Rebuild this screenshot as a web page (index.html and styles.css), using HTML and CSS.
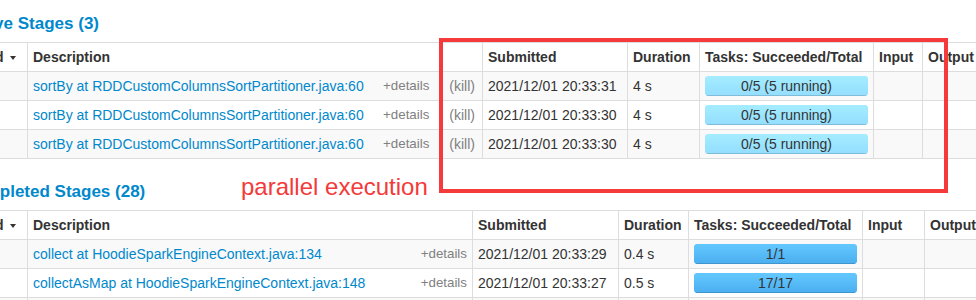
FILE: index.html
```html
<!DOCTYPE html>
<html lang="en">
<head>
    <meta charset="UTF-8">
    <meta name="viewport" content="width=device-width, initial-scale=1.0">
    <title>Stages for All Jobs</title>
    <link rel="stylesheet" href="styles.css">
</head>
<body>

<div class="page">

    <!-- Active stages -->
    <h4 class="section-title">
        <span class="collapse-arrow"></span><a href="#active">Active Stages (3)</a>
    </h4>
    <table class="stages stages-active">
        <colgroup>
            <col class="c-id">
            <col class="c-desc">
            <col class="c-submitted">
            <col class="c-duration">
            <col class="c-tasks">
            <col class="c-input">
            <col class="c-output">
        </colgroup>
        <thead>
            <tr>
                <th>Stage Id<span class="sort-arrow"></span></th>
                <th>Description</th>
                <th>Submitted</th>
                <th>Duration</th>
                <th>Tasks: Succeeded/Total</th>
                <th>Input</th>
                <th>Output</th>
            </tr>
        </thead>
        <tbody>
            <tr>
                <td>32</td>
                <td>
                    <a class="kill-link" href="#">(kill)</a>
                    <span class="expand-details">+details</span>
                    <a class="name-link" href="#">sortBy at RDDCustomColumnsSortPartitioner.java:60</a>
                </td>
                <td>2021/12/01 20:33:31</td>
                <td>4 s</td>
                <td>
                    <div class="progress">
                        <span class="progress-text">0/5 (5 running)</span>
                        <div class="bar bar-running" style="width: 100%"></div>
                    </div>
                </td>
                <td></td>
                <td></td>
            </tr>
            <tr>
                <td>31</td>
                <td>
                    <a class="kill-link" href="#">(kill)</a>
                    <span class="expand-details">+details</span>
                    <a class="name-link" href="#">sortBy at RDDCustomColumnsSortPartitioner.java:60</a>
                </td>
                <td>2021/12/01 20:33:30</td>
                <td>4 s</td>
                <td>
                    <div class="progress">
                        <span class="progress-text">0/5 (5 running)</span>
                        <div class="bar bar-running" style="width: 100%"></div>
                    </div>
                </td>
                <td></td>
                <td></td>
            </tr>
            <tr>
                <td>30</td>
                <td>
                    <a class="kill-link" href="#">(kill)</a>
                    <span class="expand-details">+details</span>
                    <a class="name-link" href="#">sortBy at RDDCustomColumnsSortPartitioner.java:60</a>
                </td>
                <td>2021/12/01 20:33:30</td>
                <td>4 s</td>
                <td>
                    <div class="progress">
                        <span class="progress-text">0/5 (5 running)</span>
                        <div class="bar bar-running" style="width: 100%"></div>
                    </div>
                </td>
                <td></td>
                <td></td>
            </tr>
        </tbody>
    </table>

    <!-- Completed stages -->
    <h4 class="section-title">
        <span class="collapse-arrow"></span><a href="#completed">Completed Stages (28)</a>
    </h4>
    <table class="stages stages-completed">
        <colgroup>
            <col class="c-id">
            <col class="c-desc">
            <col class="c-submitted">
            <col class="c-duration">
            <col class="c-tasks">
            <col class="c-input">
            <col class="c-output">
        </colgroup>
        <thead>
            <tr>
                <th>Stage Id<span class="sort-arrow"></span></th>
                <th>Description</th>
                <th>Submitted</th>
                <th>Duration</th>
                <th>Tasks: Succeeded/Total</th>
                <th>Input</th>
                <th>Output</th>
            </tr>
        </thead>
        <tbody>
            <tr>
                <td>29</td>
                <td>
                    <span class="expand-details">+details</span>
                    <a class="name-link" href="#">collect at HoodieSparkEngineContext.java:134</a>
                </td>
                <td>2021/12/01 20:33:29</td>
                <td>0.4 s</td>
                <td>
                    <div class="progress">
                        <span class="progress-text">1/1</span>
                        <div class="bar bar-completed" style="width: 100%"></div>
                    </div>
                </td>
                <td></td>
                <td></td>
            </tr>
            <tr>
                <td>28</td>
                <td>
                    <span class="expand-details">+details</span>
                    <a class="name-link" href="#">collectAsMap at HoodieSparkEngineContext.java:148</a>
                </td>
                <td>2021/12/01 20:33:27</td>
                <td>0.5 s</td>
                <td>
                    <div class="progress">
                        <span class="progress-text">17/17</span>
                        <div class="bar bar-completed" style="width: 100%"></div>
                    </div>
                </td>
                <td></td>
                <td></td>
            </tr>
            <tr>
                <td>27</td>
                <td>
                    <span class="expand-details">+details</span>
                    <a class="name-link" href="#">count at HoodieSparkSqlWriter.scala:600</a>
                </td>
                <td>2021/12/01 20:33:26</td>
                <td>1 s</td>
                <td>
                    <div class="progress">
                        <span class="progress-text">5/5</span>
                        <div class="bar bar-completed" style="width: 100%"></div>
                    </div>
                </td>
                <td></td>
                <td></td>
            </tr>
        </tbody>
    </table>

</div>

<!-- Annotation drawn over the screenshot -->
<div class="note-box"></div>
<div class="note-text">parallel execution</div>

</body>
</html>
```

FILE: styles.css
```css
html, body {
    overflow: hidden;
}
body {
    font-family: "Liberation Sans", Arial, sans-serif;
    font-size: 14px;
    line-height: 20px;
    color: #333;
    background-color: #fff;
    margin: 0;
    padding: 0;
}
a {
    color: #0088cc;
    text-decoration: none;
}
.page {
    margin-left: -57px;
    padding-top: 14px;
    width: 1200px;
}
.section-title {
    font-size: 17px;
    line-height: 20px;
    font-weight: bold;
    margin: 0 0 8px 0;
}
.collapse-arrow {
    display: inline-block;
    width: 19px;
}
.stages {
    table-layout: fixed;
    border-collapse: collapse;
    margin-bottom: 23px;
}
.stages-active { width: 1079px; }
.stages-completed { width: 1081px; }
.stages th,
.stages td {
    border: 1px solid #ddd;
    padding: 4px 5px;
    text-align: left;
    vertical-align: top;
    white-space: nowrap;
    overflow: hidden;
}
.stages th {
    font-weight: bold;
    vertical-align: bottom;
    background-color: #fff;
}
.stages tbody tr:nth-child(odd) td {
    background-color: #f9f9f9;
}
.sort-arrow {
    display: inline-block;
    margin-left: 7px;
    vertical-align: middle;
    border-left: 3.5px solid transparent;
    border-right: 3.5px solid transparent;
    border-top: 4px solid #333;
}
.c-id { width: 84px; }
.c-tasks { width: 174px; }
.c-output { width: 100px; }
.stages-active .c-desc { width: 455px; }
.stages-active .c-submitted { width: 145px; }
.stages-active .c-duration { width: 72px; }
.stages-active .c-input { width: 49px; }
.stages-completed .c-desc { width: 445px; }
.stages-completed .c-submitted { width: 146px; }
.stages-completed .c-duration { width: 70px; }
.stages-completed .c-input { width: 62px; }

.kill-link {
    float: right;
    margin-left: 20px;
    margin-right: 2px;
    color: gray;
}
.expand-details {
    float: right;
    font-size: 10pt;
    color: gray;
    cursor: pointer;
}
.progress {
    position: relative;
    height: 20px;
    border-radius: 4px;
    overflow: hidden;
    background-image: linear-gradient(to bottom, #f5f5f5, #f9f9f9);
    box-shadow: inset 0 1px 2px rgba(0, 0, 0, 0.1);
}
.progress .bar {
    height: 100%;
    box-shadow: inset 0 -1px 0 rgba(0, 0, 0, 0.15);
}
.bar-running {
    background-color: #a0dfff;
    background-image: linear-gradient(to bottom, #a4edff, #94ddff);
}
.bar-completed {
    background-color: #3ec0ff;
    background-image: linear-gradient(to bottom, #64c8ff, #4aaef0);
}
.progress-text {
    position: absolute;
    left: 0;
    right: 0;
    top: 0;
    text-align: center;
    line-height: 20px;
    color: #333;
}
.note-box {
    position: absolute;
    left: 439px;
    top: 38px;
    width: 501px;
    height: 147px;
    border: 4px solid #f43a3a;
}
.note-text {
    position: absolute;
    left: 241px;
    top: 173px;
    font-size: 24px;
    line-height: 28px;
    color: #f43a3a;
}
```
